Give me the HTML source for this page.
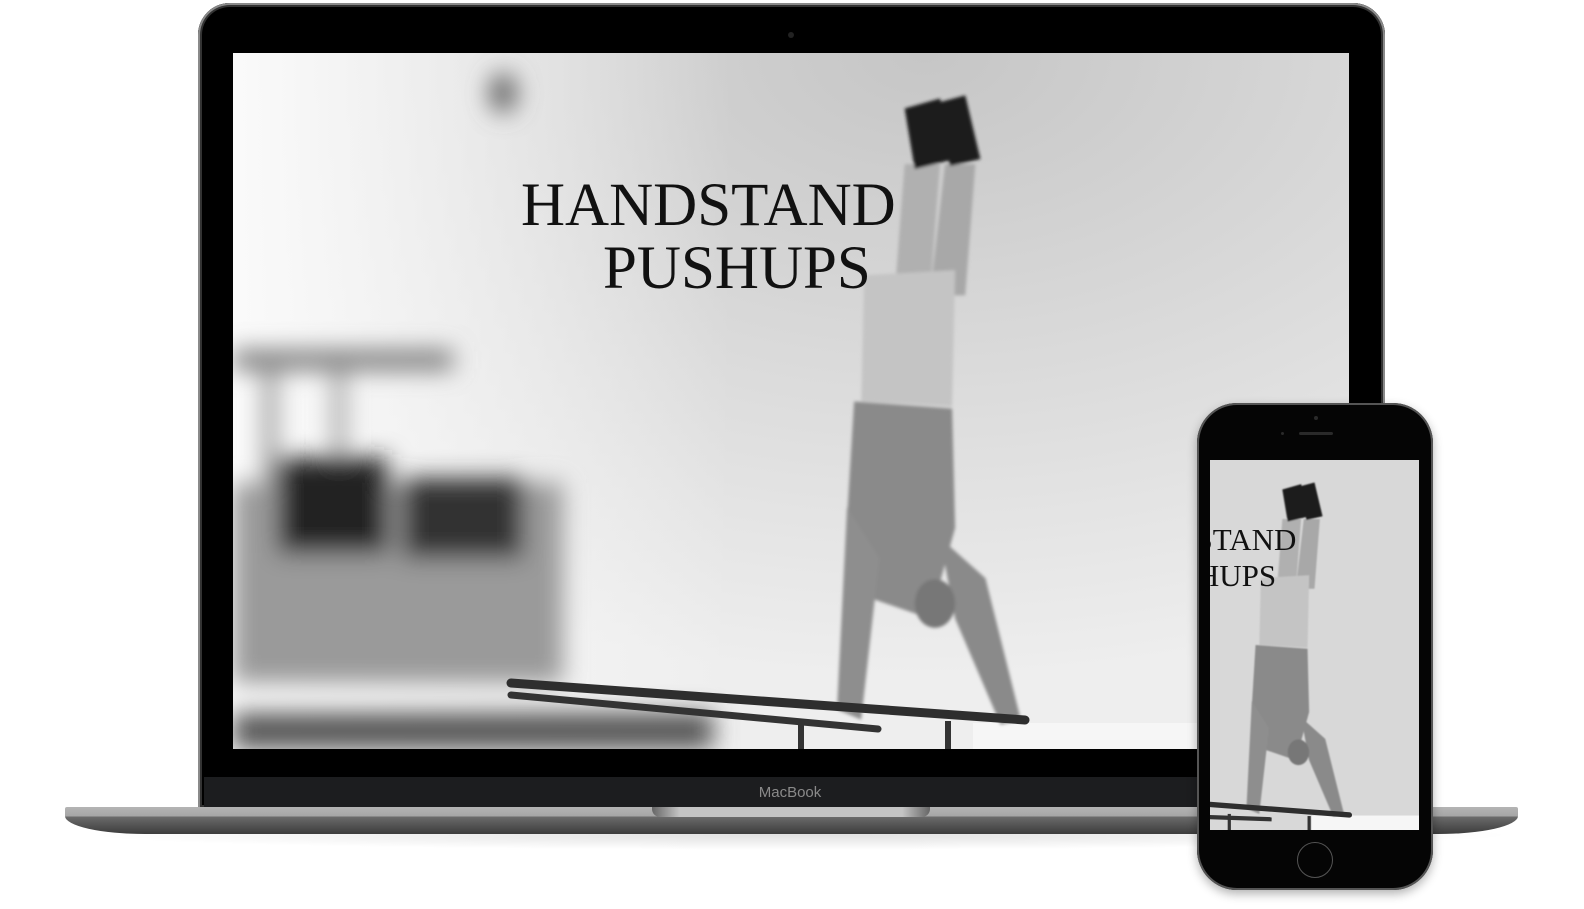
<!DOCTYPE html>
<html><head><meta charset="utf-8"><style>
html,body{margin:0;padding:0;background:#fff;width:1584px;height:909px;overflow:hidden;position:relative;font-family:"Liberation Sans",sans-serif}
.abs{position:absolute}
.lid{left:198px;top:3px;width:1187px;height:806px;border-radius:32px 32px 0 0;background:#000;box-shadow:inset 0 0 0 2px #8a8a8a,inset 0 0 0 4px #333,inset 0 0 0 5px #000}
.chin{left:204px;top:777px;width:1175px;height:31px;background:#1c1d1f}
.base{left:65px;top:807px;width:1453px;height:27px;border-radius:2px 2px 80px 80px / 2px 2px 18px 18px;background:linear-gradient(#b4b4b4 0,#a6a6a6 9px,#6a6a6a 10px,#3c3c3c 100%)}
.notch{left:652px;top:807px;width:278px;height:10px;background:linear-gradient(90deg,#666,#c4c4c4 10%,#c4c4c4 90%,#666);border-radius:0 0 8px 8px}
.scr{left:233px;top:53px;width:1116px;height:696px;overflow:hidden}
.t{font-family:"Liberation Serif",serif;color:#111;white-space:nowrap}
.phone{left:1197px;top:403px;width:236px;height:487px;border-radius:40px;background:#050505;box-shadow:inset 0 0 0 2px #555,0 4px 10px rgba(0,0,0,.3)}
.pscr{left:1210px;top:460px;width:209px;height:370px;overflow:hidden;background:#ddd}
</style></head><body>
<div class="abs" style="left:80px;top:820px;width:1440px;height:30px;border-radius:50%;background:radial-gradient(ellipse,rgba(0,0,0,.12),rgba(0,0,0,0) 70%)"></div>
<div class="abs lid"></div>
<div class="abs" style="left:788px;top:32px;width:6px;height:6px;border-radius:50%;background:#222"></div>
<div class="abs chin"></div>
<div class="abs" style="left:740px;top:784px;width:100px;text-align:center;color:#8a8a8a;font-size:15px;line-height:18px">MacBook</div>
<div class="abs base"></div>
<div class="abs notch"></div>
<div class="abs scr">
<svg width="1116" height="696" viewBox="0 0 1116 696">
<defs>
<radialGradient id="sky" cx=".62" cy="0" r=".9"><stop offset="0" stop-color="#c6c6c6"/><stop offset=".55" stop-color="#dcdcdc"/><stop offset="1" stop-color="#eeeeee"/></radialGradient>
<linearGradient id="lw" x1="0" y1="0" x2="1" y2="0"><stop offset="0" stop-color="#fafafa"/><stop offset="1" stop-color="#fafafa" stop-opacity="0"/></linearGradient>
<filter id="b20"><feGaussianBlur stdDeviation="12"/></filter>
<filter id="b3"><feGaussianBlur stdDeviation="1.5"/></filter>
</defs>
<rect width="1116" height="696" fill="url(#sky)"/>
<rect x="0" y="0" width="500" height="696" fill="url(#lw)"/>
<g filter="url(#b20)">
<rect x="0" y="297" width="220" height="20" fill="#7a7a7a"/>
<rect x="30" y="317" width="14" height="120" fill="#999"/>
<rect x="100" y="317" width="12" height="110" fill="#999"/>
<rect x="0" y="430" width="330" height="200" fill="#9a9a9a"/>
<rect x="45" y="405" width="110" height="95" fill="#222"/>
<rect x="170" y="425" width="120" height="80" fill="#333"/>
<rect x="0" y="660" width="480" height="36" fill="#555"/>
<ellipse cx="270" cy="40" rx="14" ry="20" fill="#666"/>
</g>
<rect x="740" y="670" width="376" height="26" fill="#f6f6f6"/>
<g filter="url(#b3)" transform="scale(1.01)">
<path d="M665 110 L700 110 L690 240 L655 240 Z" fill="#b0b0b0"/>
<path d="M705 110 L735 110 L725 240 L690 240 Z" fill="#a8a8a8"/>
<path d="M625 220 L715 215 L712 350 L622 345 Z" fill="#c4c4c4"/>
<path d="M615 345 L712 352 L715 470 L690 560 L632 540 L608 460 Z" fill="#8a8a8a"/>
<path d="M608 450 L640 500 L622 660 L598 650 Z" fill="#8e8e8e"/>
<path d="M700 480 L745 520 L780 660 L760 665 L715 560 Z" fill="#8a8a8a"/>
<ellipse cx="695" cy="545" rx="20" ry="24" fill="#777"/>
<path d="M665 55 L700 45 L715 105 L675 115 Z" fill="#1a1a1a"/>
<path d="M695 50 L725 42 L740 105 L710 112 Z" fill="#1a1a1a"/>
</g>
<path d="M278 630 L792 667" stroke="#2e2e2e" stroke-width="9" stroke-linecap="round"/>
<path d="M278 642 L645 676" stroke="#333" stroke-width="7" stroke-linecap="round"/>
<rect x="565" y="668" width="6" height="28" fill="#333"/>
<rect x="712" y="668" width="6" height="28" fill="#333"/>
</svg>
<div class="abs t" style="left:288px;top:118px;font-size:61px;line-height:70px">HANDSTAND</div>
<div class="abs t" style="left:370px;top:181px;font-size:61px;line-height:70px">PUSHUPS</div>
</div>
<div class="abs phone"></div>
<div class="abs" style="left:1299px;top:432px;width:34px;height:3px;border-radius:2px;background:#2a2a2a"></div>
<div class="abs" style="left:1281px;top:432px;width:3px;height:3px;border-radius:50%;background:#2a2a2a"></div>
<div class="abs" style="left:1314px;top:416px;width:4px;height:4px;border-radius:50%;background:#2a2a2a"></div>
<div class="abs" style="left:1297px;top:842px;width:34px;height:34px;border-radius:50%;border:1.5px solid #555"></div>
<div class="abs pscr">
<svg width="209" height="370" viewBox="530 0 390 690" preserveAspectRatio="none">
<rect x="0" y="0" width="1104" height="690" fill="#d8d8d8"/>
<rect x="720" y="663" width="384" height="27" fill="#f6f6f6"/>
<g filter="url(#b3)">
<path d="M665 110 L700 110 L690 240 L655 240 Z" fill="#b0b0b0"/>
<path d="M705 110 L735 110 L725 240 L690 240 Z" fill="#a8a8a8"/>
<path d="M625 220 L715 215 L712 350 L622 345 Z" fill="#c4c4c4"/>
<path d="M615 345 L712 352 L715 470 L690 560 L632 540 L608 460 Z" fill="#8a8a8a"/>
<path d="M608 450 L640 500 L622 660 L598 650 Z" fill="#8e8e8e"/>
<path d="M700 480 L745 520 L780 660 L760 665 L715 560 Z" fill="#8a8a8a"/>
<ellipse cx="695" cy="545" rx="20" ry="24" fill="#777"/>
<path d="M665 55 L700 45 L715 105 L675 115 Z" fill="#1a1a1a"/>
<path d="M695 50 L725 42 L740 105 L710 112 Z" fill="#1a1a1a"/>
</g>
<path d="M500 640 L790 662" stroke="#2e2e2e" stroke-width="10" stroke-linecap="round"/>
<path d="M500 665 L645 670" stroke="#333" stroke-width="8"/>
<rect x="563" y="660" width="6" height="30" fill="#333"/>
<rect x="712" y="664" width="6" height="26" fill="#333"/>
</svg>
<div class="abs t" style="left:-104px;top:62px;font-size:31px;line-height:36px">HANDSTAND</div>
<div class="abs t" style="left:-70px;top:98px;font-size:31px;line-height:36px">PUSHUPS</div>
</div>
</body></html>
